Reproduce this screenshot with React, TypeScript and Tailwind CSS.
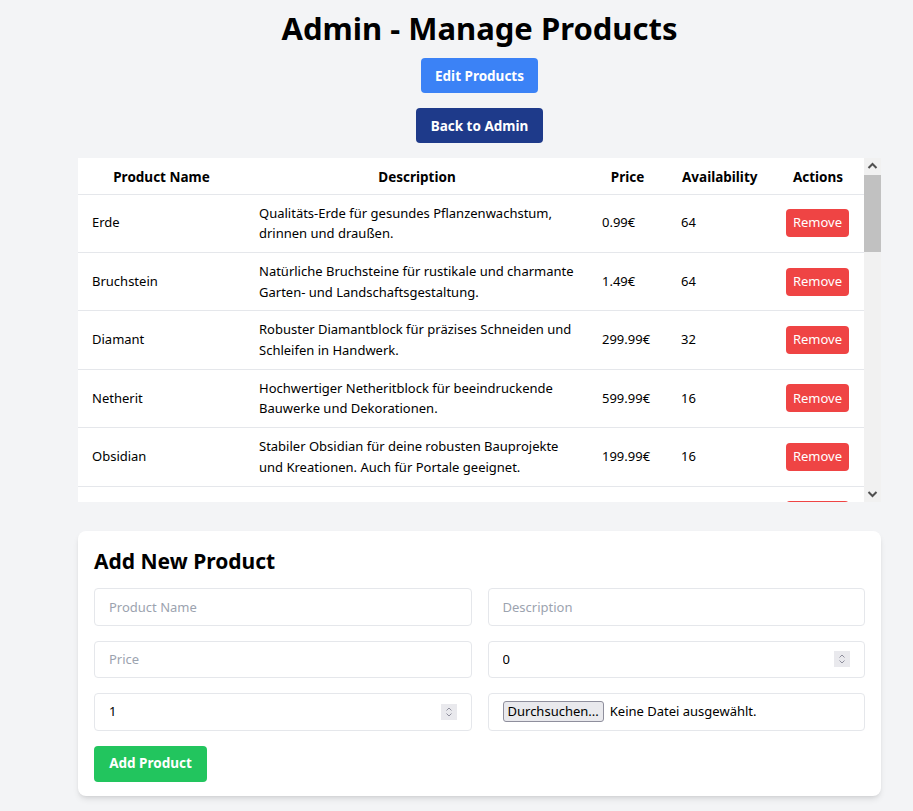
import { useState } from "react";

type Product = {
  name: string;
  description: string;
  price: string;
  availability: number;
};

const products: Product[] = [
  {
    name: "Erde",
    description: "Qualitäts-Erde für gesundes Pflanzenwachstum, drinnen und draußen.",
    price: "0.99€",
    availability: 64,
  },
  {
    name: "Bruchstein",
    description: "Natürliche Bruchsteine für rustikale und charmante Garten- und Landschaftsgestaltung.",
    price: "1.49€",
    availability: 64,
  },
  {
    name: "Diamant",
    description: "Robuster Diamantblock für präzises Schneiden und Schleifen in Handwerk.",
    price: "299.99€",
    availability: 32,
  },
  {
    name: "Netherit",
    description: "Hochwertiger Netheritblock für beeindruckende Bauwerke und Dekorationen.",
    price: "599.99€",
    availability: 16,
  },
  {
    name: "Obsidian",
    description: "Stabiler Obsidian für deine robusten Bauprojekte und Kreationen. Auch für Portale geeignet.",
    price: "199.99€",
    availability: 16,
  },
  {
    name: "Amboss",
    description: "Ein Amboss. Perfekt für Schmiede und Werkstätten.",
    price: "149.99€",
    availability: 8,
  },
];

function Spinner() {
  return (
    <svg width="16" height="16" viewBox="0 0 16 16" className="shrink-0">
      <rect width="16" height="16" fill="#e9e9ed" />
      <path d="M5.5 6.5 8 4l2.5 2.5" fill="none" stroke="#8f8f9d" strokeWidth="1" />
      <path d="M5.5 9.5 8 12l2.5-2.5" fill="none" stroke="#8f8f9d" strokeWidth="1" />
    </svg>
  );
}

// scrollbar drawn next to the table (the headless page hides native ones)
function FakeScrollbar() {
  return (
    <div className="w-[17px] shrink-0 flex flex-col bg-[#f1f1f1]">
      <svg width="17" height="17" viewBox="0 0 17 17" className="shrink-0">
        <path d="M4.5 10 8.5 6l4 4" fill="none" stroke="#505050" strokeWidth="2" />
      </svg>
      <div className="h-[77px] bg-[#c1c1c1]" />
      <div className="flex-1" />
      <svg width="17" height="17" viewBox="0 0 17 17" className="shrink-0">
        <path d="M4.5 7 8.5 11l4-4" fill="none" stroke="#505050" strokeWidth="2" />
      </svg>
    </div>
  );
}

export default function App() {
  const [items, setItems] = useState(products);
  const [name, setName] = useState("");
  const [description, setDescription] = useState("");
  const [price, setPrice] = useState("");
  const [stock, setStock] = useState("0");
  const [qty, setQty] = useState("1");

  const inputClass =
    "w-full h-[37.5px] px-[14px] border border-[#e5e7eb] rounded text-[13px] text-black placeholder:text-[#9ca3af] bg-white outline-none";
  const boxClass =
    "flex items-center h-[37.5px] px-[14px] border border-[#e5e7eb] rounded bg-white";

  return (
    <div className="min-h-screen bg-[#f3f4f6] font-['Noto_Sans',sans-serif] text-black">
      <div className="ml-[78px] w-[803px] pt-[4px] pb-4 flex flex-col items-center">
        <h1 className="text-[31px] leading-[48px] font-bold">Admin - Manage Products</h1>
        <button className="mt-[6px] h-[35px] w-[117px] pt-[2px] rounded bg-[#3b82f6] text-white text-[13.5px] font-bold">
          Edit Products
        </button>
        <button className="mt-[15px] h-[35px] w-[127px] pt-[2px] rounded bg-[#1e3a8a] text-white text-[13.5px] font-bold">
          Back to Admin
        </button>

        <div className="mt-[15px] w-full h-[344px] flex bg-white">
          <div className="flex-1 overflow-y-auto [scrollbar-width:none]">
            <table className="w-full table-fixed text-[13px]">
              <colgroup>
                <col className="w-[167px]" />
                <col className="w-[344px]" />
                <col className="w-[77px]" />
                <col className="w-[106px]" />
                <col />
              </colgroup>
              <thead>
                <tr className="border-b border-[#e5e7eb] text-[13.5px]">
                  <th className="h-[36px] px-4 pt-[2px] font-bold">Product Name</th>
                  <th className="px-4 pt-[2px] font-bold">Description</th>
                  <th className="px-4 pt-[2px] font-bold">Price</th>
                  <th className="px-4 pt-[2px] font-bold">Availability</th>
                  <th className="px-4 pt-[2px] font-bold">Actions</th>
                </tr>
              </thead>
              <tbody>
                {items.map((p) => (
                  <tr key={p.name} className="border-b border-[#e5e7eb]">
                    <td className="h-[57.4px] px-[14px] py-2">{p.name}</td>
                    <td className="px-[14px] py-2 leading-[20.7px]">{p.description}</td>
                    <td className="px-[13px] py-2">{p.price}</td>
                    <td className="px-[15px] py-2">{p.availability}</td>
                    <td className="px-[14px] py-2">
                      <button
                        onClick={() => setItems(items.filter((i) => i.name !== p.name))}
                        className="h-7 w-[63px] rounded bg-[#ef4444] text-white"
                      >
                        Remove
                      </button>
                    </td>
                  </tr>
                ))}
              </tbody>
            </table>
          </div>
          <FakeScrollbar />
        </div>

        <div className="mt-[29px] w-full bg-white rounded-lg shadow-md px-4 pt-4 pb-[14px]">
          <h2 className="text-[21px] leading-[28px] font-bold">Add New Product</h2>
          <div className="mt-[13px] grid grid-cols-2 gap-x-4 gap-y-[15px]">
            <input
              className={inputClass}
              placeholder="Product Name"
              value={name}
              onChange={(e) => setName(e.target.value)}
            />
            <input
              className={inputClass}
              placeholder="Description"
              value={description}
              onChange={(e) => setDescription(e.target.value)}
            />
            <input
              className={inputClass}
              placeholder="Price"
              value={price}
              onChange={(e) => setPrice(e.target.value)}
            />
            <div className={boxClass}>
              <input
                type="number"
                className="flex-1 min-w-0 text-[13px] outline-none [appearance:textfield] [&::-webkit-inner-spin-button]:appearance-none"
                value={stock}
                onChange={(e) => setStock(e.target.value)}
              />
              <Spinner />
            </div>
            <div className={boxClass}>
              <input
                type="number"
                className="flex-1 min-w-0 text-[13px] outline-none [appearance:textfield] [&::-webkit-inner-spin-button]:appearance-none"
                value={qty}
                onChange={(e) => setQty(e.target.value)}
              />
              <Spinner />
            </div>
            <div className={boxClass + " gap-[6px] text-[13px]"}>
              <button className="h-[21px] px-[4px] border border-[#8f8f9d] rounded-[3px] bg-[#e9e9ed] leading-[19px]">
                Durchsuchen...
              </button>
              <span>Keine Datei ausgewählt.</span>
            </div>
          </div>
          <button className="mt-[15px] h-[36px] w-[113px] rounded bg-[#22c55e] text-white text-[13.5px] font-bold">
            Add Product
          </button>
        </div>
      </div>
    </div>
  );
}
